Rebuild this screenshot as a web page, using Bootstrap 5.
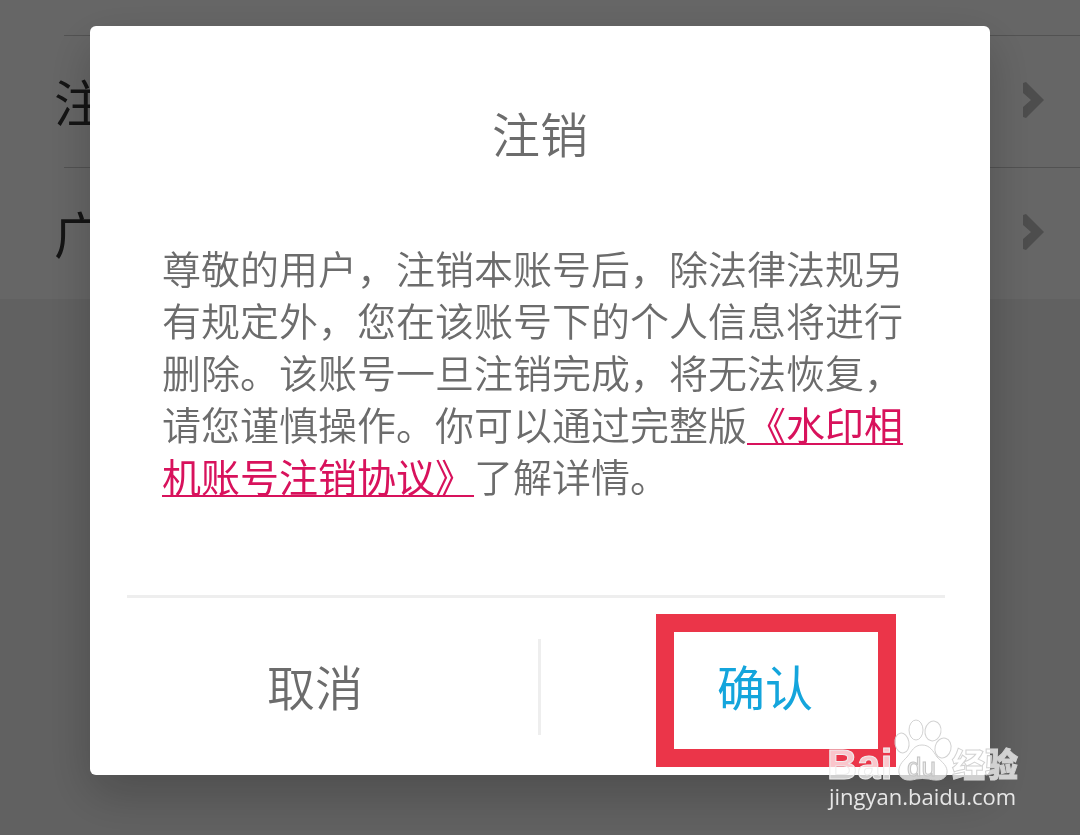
<!DOCTYPE html>
<html lang="zh-CN">
<head>
<meta charset="utf-8">
<meta name="viewport" content="width=device-width, initial-scale=1">
<title>注销</title>
<link rel="stylesheet" href="https://cdn.jsdelivr.net/npm/bootstrap@5.3.0/dist/css/bootstrap.min.css">
<style>
  body { background: #f2f2f2; color: #333; font-family: "Noto Sans CJK SC", sans-serif; }
  .settings { padding-top: 35px; background: #fff; }
  .setting-row { height: 132px; padding-right: 36px; padding-bottom: 2px; color: #333; font-size: 50px; line-height: 60px; text-decoration: none; }
  .setting-row::before { content: ""; width: 54px; }
  .setting-rule { height: 1px; margin: 0 0 -1px 64px; background: #ccc; }
  .modal-backdrop { --bs-backdrop-opacity: .6; }
  .account-dialog { max-width: 900px; margin: 26px auto; padding: 0; }
  .account-dialog .modal-content { border: 0; border-radius: 6px; color: #6c6c6c; box-shadow: 0 18px 48px rgba(0, 0, 0, .22); }
  .account-title { padding-top: 76px; font-size: 48px; line-height: 60px; font-weight: 350; }
  .account-text { padding: 79px 72px 94px; font-size: 39px; line-height: 52px; font-weight: 350; }
  .account-text a { color: #d8125c; font-weight: 400; text-decoration-thickness: 2px; text-underline-offset: 3px; text-decoration-skip-ink: none; }
  .account-rule { height: 3px; margin: 0 45px 0 37px; background: #eee; }
  .account-actions { height: 177px; }
  .account-actions .btn { padding: 0 0 4px; border: 0; border-radius: 0; color: #6c6c6c; font-size: 48px; line-height: 60px; font-weight: 350; }
  .account-actions .btn.confirm { color: #14a5dc; font-weight: 400; }
  .action-rule { width: 3px; height: 96px; margin: 0 -1px 0 -2px; background: #eee; }
  .highlight { inset: 16px 94px 8px 116px; border: 18px solid #eb3549; pointer-events: none; }
  .watermark { right: 54px; top: 716px; z-index: 1060; }
</style>
</head>
<body>
<main class="settings">
  <div class="setting-rule"></div>
  <a href="#" class="setting-row d-flex align-items-center"><span>注</span>
    <svg class="ms-auto" width="21" height="36" viewBox="0 0 21 36" fill="#c0c0c0"><path d="M0 1 3 0 21 18 3 36 0 35V25L8 18 0 11Z"/></svg></a>
  <div class="setting-rule"></div>
  <a href="#" class="setting-row d-flex align-items-center"><span>广</span>
    <svg class="ms-auto" width="21" height="36" viewBox="0 0 21 36" fill="#c0c0c0"><path d="M0 1 3 0 21 18 3 36 0 35V25L8 18 0 11Z"/></svg></a>
</main>

<div class="modal-backdrop show"></div>
<div class="modal d-block" role="dialog" aria-modal="true" aria-labelledby="account-title">
  <div class="modal-dialog account-dialog">
    <div class="modal-content">
      <h1 class="account-title text-center mb-0" id="account-title">注销</h1>
      <p class="account-text mb-0">尊敬的用户，注销本账号后，除法律法规另有规定外，您在该账号下的个人信息将进行删除。该账号一旦注销完成，将无法恢复，请您谨慎操作。你可以通过完整版<a href="#">《水印相机账号注销协议》</a>了解详情。</p>
      <div class="account-rule"></div>
      <div class="account-actions d-flex align-items-center">
        <button type="button" class="btn w-50 h-100">取消</button>
        <div class="action-rule flex-shrink-0"></div>
        <div class="position-relative w-50 h-100">
          <button type="button" class="btn confirm w-100 h-100">确认</button>
          <div class="highlight position-absolute"></div>
        </div>
      </div>
    </div>
  </div>
</div>

<svg class="watermark position-absolute" width="200" height="100" viewBox="0 0 200 100" fill="#fff" fill-opacity=".72" stroke="#d2d2d2" stroke-width="1">
  <text x="1" y="63" font-family="Liberation Sans, sans-serif" font-weight="700" font-size="42" stroke="#eee">Bai</text>
  <ellipse cx="90" cy="14" rx="7" ry="10"/>
  <ellipse cx="107" cy="15" rx="8" ry="10" transform="rotate(10 107 15)"/>
  <ellipse cx="76" cy="27" rx="7" ry="10" transform="rotate(-10 76 27)"/>
  <ellipse cx="117" cy="32" rx="8" ry="10" transform="rotate(14 117 32)"/>
  <path d="M96 29C88 29 86 35 81 41C76 46 72 50 73 57C75 65 84 65 90 63Q96 62 103 63C110 65 119 65 121 57C122 50 116 46 111 41C107 35 104 29 96 29Z"/>
  <text x="81" y="60" font-family="Liberation Sans, sans-serif" font-size="26" fill="#e4e4e4" stroke="#c4c4c4">du</text>
  <text x="126" y="61" font-family="Noto Sans CJK SC, sans-serif" font-weight="900" font-size="33">经验</text>
  <text x="3" y="89" font-family="Open Sans, sans-serif" font-size="22" stroke="none" fill-opacity=".85">jingyan.baidu.com</text>
</svg>
<script src="https://cdn.jsdelivr.net/npm/bootstrap@5.3.0/dist/js/bootstrap.bundle.min.js"></script>
</body>
</html>
